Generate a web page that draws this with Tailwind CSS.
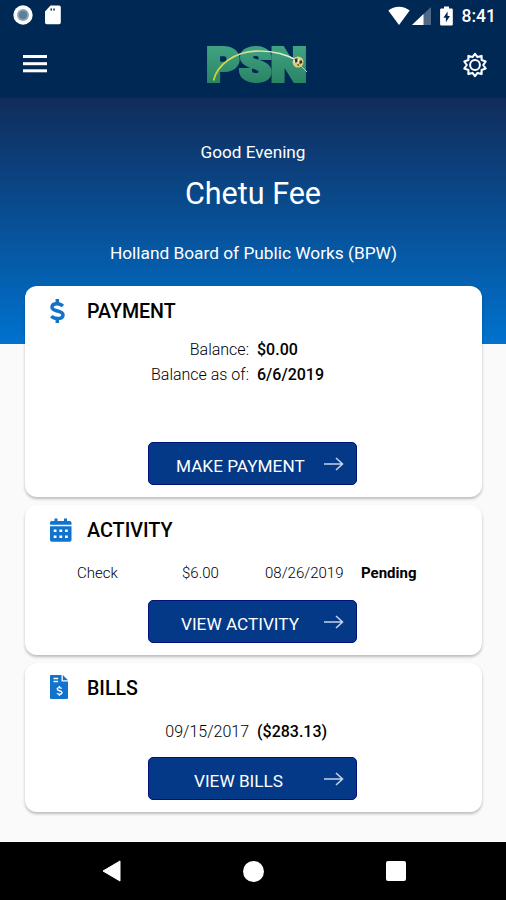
<!DOCTYPE html>
<html lang="en">
<head>
  <meta charset="UTF-8" />
  <meta name="viewport" content="width=device-width, initial-scale=1.0" />
  <title>PSN Payments</title>
  <script src="https://cdn.jsdelivr.net/npm/@tailwindcss/browser@4"></script>
</head>
<body class="bg-[#fafafa] font-[Roboto,sans-serif] text-black">
  <div class="flex flex-col w-[506px] h-[900px] overflow-hidden">
    <header class="h-[98px] shrink-0 bg-[#002855] text-white">
      <!-- status bar -->
      <div class="flex items-center justify-between h-8 pl-[13px] pr-[10px]">
        <div class="flex items-center gap-[12px] pb-0.5">
          <svg class="size-5" viewBox="0 0 20 20">
            <circle cx="10" cy="10" r="9.7" fill="#fff" />
            <circle cx="10" cy="10" r="6" fill="#8fa5b8" />
            <circle cx="10" cy="10" r="4.2" fill="#5d7f99" />
          </svg>
          <svg class="w-4 h-5" viewBox="0 0 16 20">
            <path d="M5.500.5H14a1.800 1.800 0 0 1 1.800 1.800v15.200a1.800 1.800 0 0 1-1.800 1.800H1.800A1.800 1.800 0 0 1 0 17.500V6.500z" fill="#fff" />
            <path d="M5.500 3.500h1.500v2H5.500zM8.300 3.500h1.500v2H8.300z" fill="#002855" />
          </svg>
        </div>
        <div class="flex items-center">
          <svg class="w-[22px] h-5" viewBox="0 0 22 20">
            <path d="M11 19 .3 4.600C3.200 2.200 7 .8 11 .8s7.800 1.400 10.700 3.800z" fill="#fff" />
          </svg>
          <svg class="ml-0.5 w-[19px] h-5" viewBox="0 0 19 20">
            <path d="M0 19 19 1v18z" fill="#4d6988" />
            <path d="M0 19 11.500 8v11z" fill="#fff" />
          </svg>
          <svg class="ml-[9px] mr-[9px] w-[13px] h-5" viewBox="0 0 13 20">
            <path d="M4 .5h5V2.500h2.700A1.200 1.200 0 0 1 12.800 3.700v14.500a1.200 1.200 0 0 1-1.200 1.200H1.300A1.200 1.200 0 0 1 .1 18.200V3.700A1.200 1.200 0 0 1 1.300 2.500H4z" fill="#fff" />
            <path d="M7.600 5.500 3.400 11.800h2.500v4.500L10 10h-2.400z" fill="#002855" />
          </svg>
          <span class="text-[17.500px] font-medium leading-8">8:41</span>
        </div>
      </div>
      <!-- toolbar -->
      <div class="flex items-center justify-between h-16 pl-[23px] pr-[18px]">
        <svg class="w-6 h-[18px]" viewBox="0 0 24 18" fill="#fff">
          <rect y="0" width="24" height="3" />
          <rect y="7.200" width="24" height="3" />
          <rect y="14.300" width="24" height="3" />
        </svg>
        <svg class="ml-1 mt-px w-[112px] h-16" viewBox="-4 -11 112 64">
          <defs>
            <linearGradient id="letters" x1="0" y1="0" x2="0" y2="1">
              <stop offset="0" stop-color="#46a987" />
              <stop offset="1" stop-color="#247d5e" />
            </linearGradient>
            <linearGradient id="arc" x1="0" y1="0" x2="1" y2="0">
              <stop offset="0" stop-color="#c5d52e" />
              <stop offset=".45" stop-color="#d5dda0" />
              <stop offset="1" stop-color="#eef5f2" />
            </linearGradient>
          </defs>
          <text x="1.500" y="36.500" textLength="100" lengthAdjust="spacingAndGlyphs" font-family="Roboto, sans-serif" font-size="46" font-weight="900" fill="url(#letters)" stroke="url(#letters)" stroke-width="4">PSN</text>
          <path d="M8.500 36.500C12 22 28 7 54 7c16 0 29 4 39 10" fill="none" stroke="url(#arc)" stroke-width="1.700" />
          <path d="m95 21 7 7" stroke="#b9cdb0" stroke-width="1" />
          <circle cx="93" cy="18" r="5.500" fill="#e2cf7c" />
          <circle cx="91.500" cy="16.500" r="2.500" fill="#f7f2d8" />
          <path d="m89.500 15 3-1v4l-2 1zM94.500 17l2-1 1 3-3 1zM91.500 21l2-1 1 2z" fill="#2f3a2a" />
        </svg>
        <svg class="mt-px size-[26px]" viewBox="-13 -13 26 26" fill="none" stroke="#fff" stroke-linejoin="round">
          <circle r="4.900" stroke-width="2" />
          <path d="M0-11.200 2.500-7.900 6.600-9.100 6.600-4.900 10.700-3.500 8.200 0 10.700 3.500 6.600 4.900 6.600 9.100 2.500 7.900 0 11.200-2.500 7.900-6.600 9.100-6.600 4.900-10.700 3.500-8.200 0-10.700-3.500-6.600-4.900-6.600-9.100-2.500-7.900z" stroke-width="2.100" />
        </svg>
      </div>
    </header>

    <section class="flex flex-col items-center h-[246px] shrink-0 pt-[42px] bg-linear-to-b/srgb from-[#102c5b] to-[#0072ce] text-white">
      <p class="text-[17.200px] leading-6">Good Evening</p>
      <h1 class="mt-[10px] text-[30.500px] leading-10">Chetu Fee</h1>
      <p class="mt-[27px] ml-px text-[17.300px] leading-6">Holland Board of Public Works (BPW)</p>
    </section>

    <main class="flex flex-col gap-2 grow -mt-[58px] pl-[25px] pr-6">
      <section class="flex flex-col items-center h-[211px] bg-white rounded-[12px] shadow-[0_2px_3px_rgba(0,0,0,0.25)]">
        <div class="flex items-center self-stretch h-[50px] pl-[25px]">
          <svg class="w-[37px] h-6" viewBox="0 0 37 24" fill="none" stroke="#1173cb">
            <path d="M12.800 7C11.500 5.500 9.500 4.700 7 4.700c-3.200 0-5 1.400-5 3.500 0 5 11 2.500 11 7.700 0 2.200-2.200 3.600-5.500 3.600-2.700 0-4.800-.8-6.200-2.400" stroke-width="3.500" />
            <path d="M7.300 0v5M7.300 19v5" stroke-width="3.500" />
          </svg>
          <h2 class="pt-0.5 text-[19.600px] font-medium">PAYMENT</h2>
        </div>
        <dl class="grid grid-cols-[224px_1fr] gap-x-2 self-stretch mt-px text-base leading-[25px]">
          <dt class="text-right font-light">Balance:</dt>
          <dd class="font-medium">$0.00</dd>
          <dt class="text-right font-light">Balance as of:</dt>
          <dd class="font-medium">6/6/2019</dd>
        </dl>
        <button class="flex items-center justify-end w-[209px] h-[43px] mt-[55px] mr-0.5 pr-3 rounded-[5px] bg-[#033987] border border-[#05107a] text-white text-[17.200px]">
          <span class="grow pt-1.5 pl-[27px] text-left">MAKE PAYMENT</span>
          <svg class="w-5 h-4" viewBox="0 0 20 16" fill="none" stroke="#c5d2e8" stroke-width="1.600">
            <path d="M0 8h19M12 2 18.500 8 12 14" />
          </svg>
        </button>
      </section>

      <section class="flex flex-col items-center h-[150px] bg-white rounded-[12px] shadow-[0_2px_3px_rgba(0,0,0,0.25)]">
        <div class="flex items-center self-stretch h-[50px] pl-[25px]">
          <svg class="w-[37px] h-6" viewBox="0 0 37 24" fill="#1173cb">
            <path d="M0 6.800V4.800a1.800 1.800 0 0 1 1.800-1.800H4.500V.5h3V3h6.500V.5h3V3h2.700a1.800 1.800 0 0 1 1.800 1.800v2z" />
            <path fill-rule="evenodd" d="M0 8.300h21.500v13.700a1.800 1.800 0 0 1-1.800 1.800H1.800A1.800 1.800 0 0 1 0 22zM3.700 11.500v2.600h2.800v-2.600zM9.400 11.500v2.600h2.800v-2.600zM15 11.500v2.600h2.800v-2.600zM3.700 17.500v2.600h2.800v-2.600zM9.400 17.500v2.600h2.800v-2.600zM15 17.500v2.600h2.800v-2.600z" />
          </svg>
          <h2 class="pt-0.5 text-[19.800px] font-medium">ACTIVITY</h2>
        </div>
        <div class="grid grid-cols-[105px_83px_96px_1fr] self-stretch mt-2 pl-[52px] text-[15px] leading-5 font-light">
          <span>Check</span>
          <span>$6.00</span>
          <span>08/26/2019</span>
          <span class="font-bold">Pending</span>
        </div>
        <button class="flex items-center justify-end w-[209px] h-[43px] mt-[17px] mr-0.5 pr-3 rounded-[5px] bg-[#033987] border border-[#05107a] text-white text-[17.200px]">
          <span class="grow pt-1.5 pl-8 text-left">VIEW ACTIVITY</span>
          <svg class="w-5 h-4" viewBox="0 0 20 16" fill="none" stroke="#c5d2e8" stroke-width="1.600">
            <path d="M0 8h19M12 2 18.500 8 12 14" />
          </svg>
        </button>
      </section>

      <section class="flex flex-col items-center h-[149px] bg-white rounded-[12px] shadow-[0_2px_3px_rgba(0,0,0,0.25)]">
        <div class="flex items-center self-stretch h-[49px] pl-[25px]">
          <svg class="w-[37px] h-6 mb-px" viewBox="0 0 37 24">
            <path d="M0 1A1 1 0 0 1 1 0h10.500v6.500H18V23a1 1 0 0 1-1 1H1a1 1 0 0 1-1-1zM12.800 0 18 5.200h-5.200z" fill="#1173cb" />
            <path d="M3.500 3.500h4.700M3.500 6.500h4.700" stroke="#fff" stroke-width="1.300" />
            <path d="M11.600 13.600c-.5-.7-1.300-1-2.300-1-1.300 0-2.100.6-2.100 1.500 0 2.200 4.800 1.100 4.800 3.400 0 1-.9 1.700-2.300 1.700-1.200 0-2.100-.4-2.700-1.100M9.400 11v1.700M9.400 19v1.800" fill="none" stroke="#fff" stroke-width="1.400" />
          </svg>
          <h2 class="pt-0.5 text-[19.600px] font-medium">BILLS</h2>
        </div>
        <div class="grid grid-cols-[224px_1fr] gap-x-2 self-stretch mt-[7px] text-base leading-[25px]">
          <span class="text-right font-light">09/15/2017</span>
          <span class="font-medium">($283.13)</span>
        </div>
        <button class="flex items-center justify-end w-[209px] h-[43px] mt-[13px] mr-0.5 pr-3 rounded-[5px] bg-[#033987] border border-[#05107a] text-white text-[17.200px]">
          <span class="grow pt-1.5 pl-[45px] text-left">VIEW BILLS</span>
          <svg class="w-5 h-4" viewBox="0 0 20 16" fill="none" stroke="#c5d2e8" stroke-width="1.600">
            <path d="M0 8h19M12 2 18.500 8 12 14" />
          </svg>
        </button>
      </section>
    </main>

    <!-- android navigation -->
    <nav class="flex items-center justify-between h-[58px] shrink-0 pl-[102px] pr-[100px] bg-black">
      <svg class="w-[19px] h-[22px]" viewBox="0 0 19 22">
        <path d="M18 1v20L1 11z" fill="#fff" stroke="#fff" stroke-linejoin="round" />
      </svg>
      <div class="size-[21px] rounded-full bg-white"></div>
      <div class="size-5 rounded-[2px] bg-white"></div>
    </nav>
  </div>
</body>
</html>
